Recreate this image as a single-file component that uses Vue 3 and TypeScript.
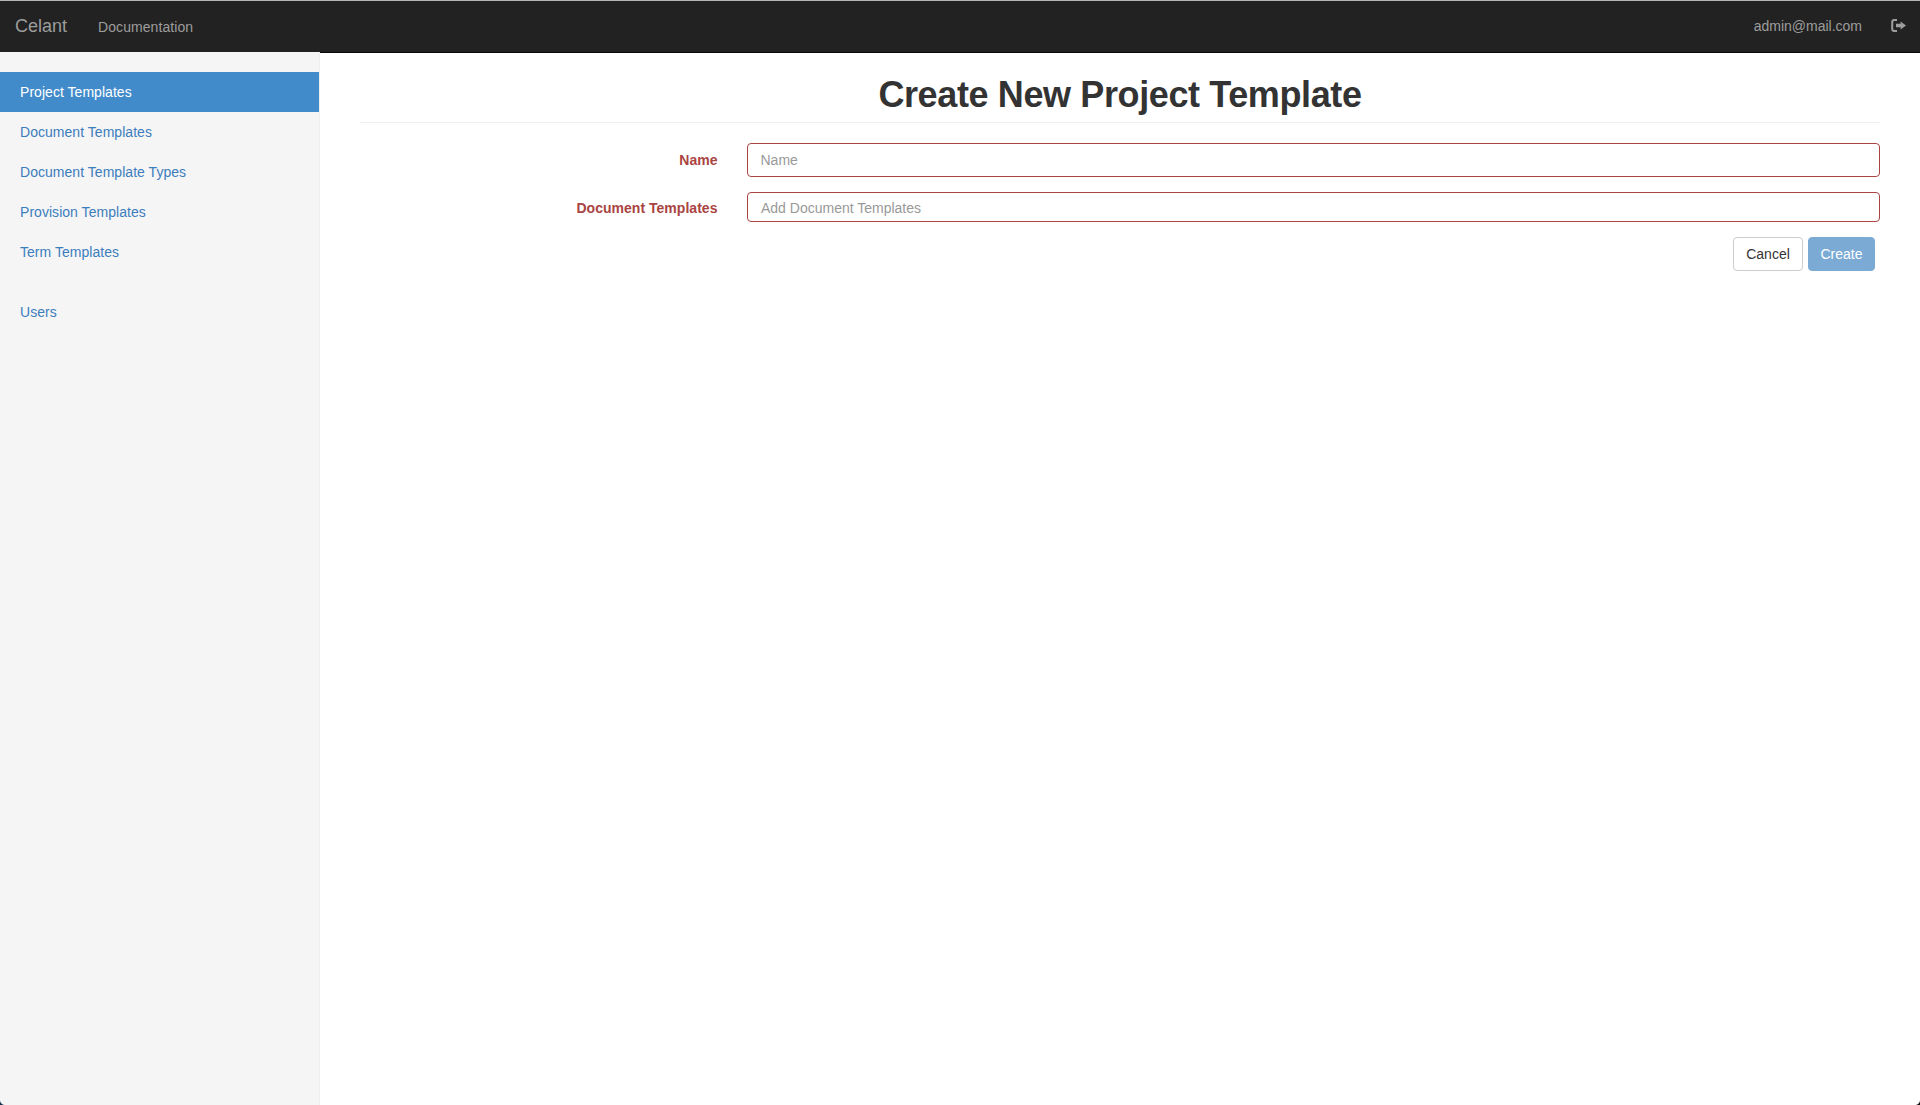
<script setup lang="ts">
const primaryNav: string[] = ['Project Templates', 'Document Templates', 'Document Template Types', 'Provision Templates', 'Term Templates']
</script>

<template>
  <div class="page">
    <header class="navbar">
      <a class="brand">Celant</a>
      <a class="nav-link docs">Documentation</a>
      <span class="spacer"></span>
      <a class="nav-link user">admin@mail.com</a>
      <svg class="logout" viewBox="0 0 15 13" width="15" height="13" aria-label="Log out">
        <path d="M6 0H3.2A3 3 0 0 0 .2 3v7a3 3 0 0 0 3 3H6v-2H3.4a1.2 1.2 0 0 1-1.2-1.2V3.2A1.2 1.2 0 0 1 3.4 2H6z" fill="currentColor" />
        <path d="M9.6 2.4 15 6.5l-5.4 4.1V8.3H5V4.7h4.6z" fill="currentColor" />
      </svg>
    </header>
    <div class="body">
      <aside class="sidebar">
        <ul class="side-nav">
          <li v-for="(item, i) in primaryNav" :key="item" :class="{ active: i === 0 }">{{ item }}</li>
        </ul>
        <ul class="side-nav second">
          <li>Users</li>
        </ul>
      </aside>
      <main class="main">
        <h1 class="title">Create New Project Template</h1>
        <form class="form" @submit.prevent>
          <div class="row">
            <label class="label">Name</label>
            <input class="input" type="text" placeholder="Name" />
          </div>
          <div class="row">
            <label class="label lower">Document Templates</label>
            <div class="tags">Add Document Templates</div>
          </div>
          <div class="actions">
            <button class="btn cancel" type="button">Cancel</button>
            <button class="btn create" type="submit">Create</button>
          </div>
        </form>
      </main>
    </div>
    <span class="corner left"></span>
    <span class="corner right"></span>
  </div>
</template>

<style>
html, body { margin: 0; background: #fff; }
</style>

<style scoped>
.page {
  position: relative;
  height: 1105px;
  display: flex;
  flex-direction: column;
  overflow: hidden;
  font-family: "Liberation Sans", Arial, sans-serif;
  font-size: 14px;
  line-height: 20px;
  color: #333;
}
.corner { position: absolute; bottom: 0; width: 5px; height: 5px; }
.corner.left { left: 0; background: radial-gradient(circle at 100% 0, transparent 4.5px, #12304a 5.5px); }
.corner.right { right: 0; background: radial-gradient(circle at 0 0, transparent 4.5px, #111 5.5px); }
.navbar {
  box-sizing: border-box;
  height: 53px;
  flex: none;
  display: flex;
  align-items: center;
  padding: 0 15px 1px;
  background: #222;
  border-top: 1px solid #b5b5b5;
  border-bottom: 1px solid #080808;
  color: #9d9d9d;
}
.brand { font-size: 18px; width: 83px; }
.nav-link { font-size: 14px; }
.docs { letter-spacing: 0.08px; padding-top: 1px; }
.spacer { flex: 1; }
.user { margin-right: 29px; }
.logout { margin: 0 -1px 2px 0; }
.body { flex: 1; display: flex; min-height: 0; }
.sidebar {
  position: relative;
  box-sizing: border-box;
  width: 320px;
  margin-top: -1px;
  padding-top: 20px;
  background: #f5f5f5;
  border-right: 1px solid #eee;
  flex: none;
}
.side-nav { list-style: none; margin: 0; padding: 0; letter-spacing: 0.04px; }
.side-nav li { height: 40px; padding: 10px 20px; box-sizing: border-box; color: #3c7dbd; }
.side-nav li.active { background: #428bca; color: #fff; }
.second { margin-top: 20px; }
.main { flex: 1; min-width: 0; padding: 0 40px; }
.title {
  margin: 22px 0 20px;
  padding-bottom: 7px;
  border-bottom: 1px solid #eee;
  font-size: 36px;
  line-height: 39.6px;
  font-weight: 700;
  letter-spacing: -0.38px;
  text-align: center;
  color: #333;
}
.form { display: flex; flex-direction: column; }
.row { display: flex; align-items: center; margin-bottom: 15px; }
.label {
  width: 357.5px;
  flex: none;
  margin-right: 29.5px;
  text-align: right;
  font-weight: 700;
  color: #a94442;
}
.lower { padding-top: 2px; letter-spacing: 0.03px; }
.input, .tags {
  flex: 1;
  min-width: 0;
  box-sizing: border-box;
  border: 1px solid #a94442;
  border-radius: 4px;
  background: #fff;
  font: inherit;
  color: #999;
  padding: 6px 12.5px;
}
.input { height: 34px; outline: none; }
.input::placeholder { color: #999; opacity: 1; }
.tags { height: 30px; padding: 5px 13px 3px; }
.actions { display: flex; justify-content: flex-end; gap: 5px; padding-right: 5px; }
.btn {
  box-sizing: border-box;
  height: 34px;
  padding: 6px 0;
  border: 1px solid #ccc;
  border-radius: 4px;
  font: inherit;
  text-align: center;
}
.cancel { width: 70px; background: #fff; color: #333; }
.create { width: 67px; background: #7baad4; border-color: #7baad4; color: #fff; }
</style>
